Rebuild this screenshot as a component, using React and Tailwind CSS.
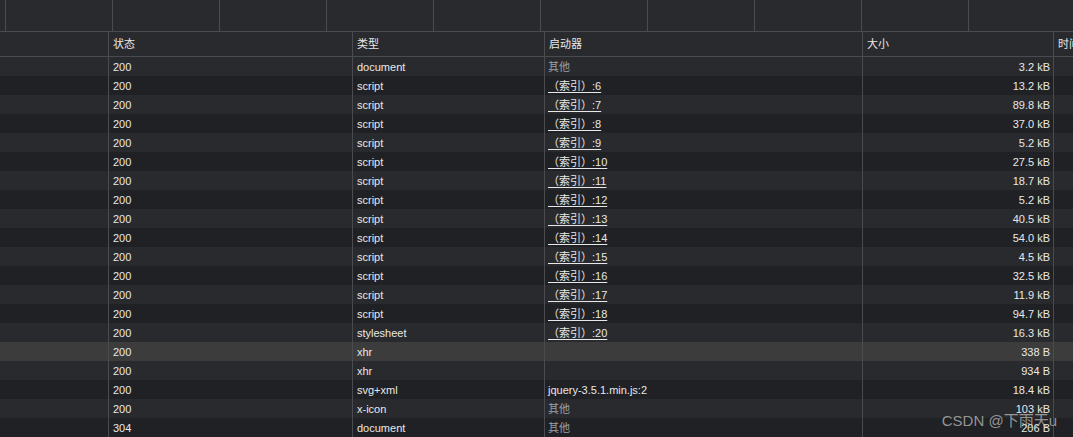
import React from "react";

const rows = [
  ["200", "document", "其他", "3.2 kB"],
  ["200", "script", ":6", "13.2 kB"],
  ["200", "script", ":7", "89.8 kB"],
  ["200", "script", ":8", "37.0 kB"],
  ["200", "script", ":9", "5.2 kB"],
  ["200", "script", ":10", "27.5 kB"],
  ["200", "script", ":11", "18.7 kB"],
  ["200", "script", ":12", "5.2 kB"],
  ["200", "script", ":13", "40.5 kB"],
  ["200", "script", ":14", "54.0 kB"],
  ["200", "script", ":15", "4.5 kB"],
  ["200", "script", ":16", "32.5 kB"],
  ["200", "script", ":17", "11.9 kB"],
  ["200", "script", ":18", "94.7 kB"],
  ["200", "stylesheet", ":20", "16.3 kB"],
  ["200", "xhr", "", "338 B"],
  ["200", "xhr", "", "934 B"],
  ["200", "svg+xml", "jquery-3.5.1.min.js:2", "18.4 kB"],
  ["200", "x-icon", "其他", "103 kB"],
  ["304", "document", "其他", "206 B"],
];

const grid = "grid grid-cols-[108px_244px_192px_318px_191px_1fr]";
const cell = "border-l border-[#4a4b4e] px-[4px] whitespace-nowrap overflow-hidden";

function Initiator({ value }) {
  if (value === "其他") return <span className="text-[#9aa0a6]">其他</span>;
  if (value.startsWith(":"))
    return (
      <span className="underline underline-offset-2">
        （索引）{value}
      </span>
    );
  return <span>{value}</span>;
}

export default function App() {
  return (
    <div
      className="relative w-[1073px] h-[437px] overflow-hidden bg-[#202124] text-[11px] text-[#e8e8e8]"
      style={{ fontFamily: '"Liberation Sans", "Noto Sans CJK SC", sans-serif' }}
    >
      <div className="flex h-[32px] border-b border-[#4a4b4e] bg-[#292a2d]">
        <div className="w-[5px] shrink-0" />
        {Array.from({ length: 10 }).map((_, i) => (
          <div key={i} className="w-[107px] shrink-0 border-l border-[#4a4b4e]" />
        ))}
      </div>

      <div className={`${grid} h-[25px] border-b border-[#4a4b4e] bg-[#292a2d] leading-[24px]`}>
        <div />
        <div className={cell}>状态</div>
        <div className={cell}>类型</div>
        <div className={cell}>启动器</div>
        <div className={cell}>大小</div>
        <div className={cell}>时间</div>
      </div>

      {rows.map((r, i) => (
        <div
          key={i}
          className={`${grid} h-[19px] leading-[20px] ${
            i === 15 ? "bg-[#3c3c3c]" : i % 2 === 0 ? "bg-[#292a2d]" : "bg-[#202124]"
          }`}
        >
          <div />
          <div className={cell}>{r[0]}</div>
          <div className={cell}>{r[1]}</div>
          <div className={`${cell} pl-[3px]`}>
            <Initiator value={r[2]} />
          </div>
          <div className={`${cell} text-right pr-[3px]`}>{r[3]}</div>
          <div className={cell} />
        </div>
      ))}

      <div className="absolute right-[16px] bottom-[9px] text-[15px] leading-none text-[#c8c8c8]/70">
        CSDN @下雨天u
      </div>
    </div>
  );
}
